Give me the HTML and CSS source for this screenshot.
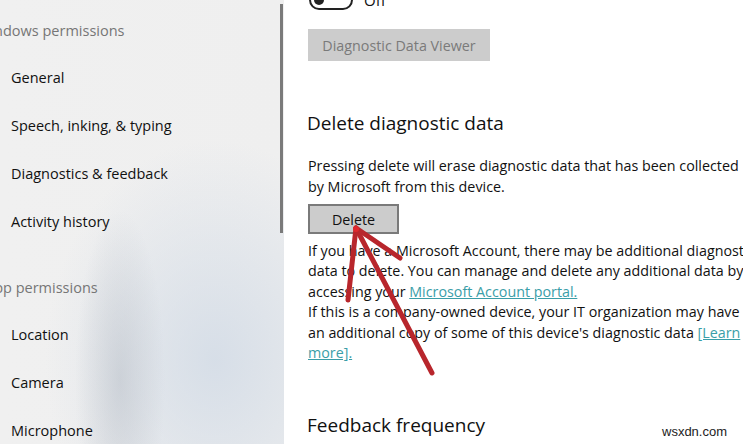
FILE: index.html
```html
<!DOCTYPE html>
<html>
<head>
<meta charset="utf-8">
<link rel="stylesheet" href="styles.css">
</head>
<body>
<div class="page">
  <nav class="sidebar">
    <div class="side-head first">Windows permissions</div>
    <div class="side-item">General</div>
    <div class="side-item">Speech, inking, &amp; typing</div>
    <div class="side-item">Diagnostics &amp; feedback</div>
    <div class="side-item">Activity history</div>
    <div class="side-head second">App permissions</div>
    <div class="side-item">Location</div>
    <div class="side-item">Camera</div>
    <div class="side-item">Microphone</div>
    <div class="scrollbar"></div>
  </nav>
  <main class="content">
    <div class="toggle-row">
      <span class="toggle"><span class="knob"></span></span>
      <span class="toggle-label">Off</span>
    </div>
    <button class="btn-disabled">Diagnostic Data Viewer</button>
    <h2 class="section-title">Delete diagnostic data</h2>
    <p class="para">Pressing delete will erase diagnostic data that has been collected<br>by Microsoft from this device.</p>
    <button class="btn-delete">Delete</button>
    <p class="para para-2">If you have a Microsoft Account, there may be additional diagnostic<br>data to delete. You can manage and delete any additional data by<br>accessing your <a class="link">Microsoft Account portal.</a><br>If this is a company-owned device, your IT organization may have<br>an additional copy of some of this device's diagnostic data <a class="link">[Learn<br>more].</a></p>
    <h2 class="section-title feedback">Feedback frequency</h2>
  </main>
</div>
<div class="watermark">wsxdn.com</div>
<svg class="arrow" width="743" height="444" viewBox="0 0 743 444">
  <g fill="none" stroke="#b8262c" stroke-width="5" stroke-linecap="round" stroke-linejoin="round">
    <path d="M356 228 L432 373"/>
    <path d="M356 228 L348 300"/>
    <path d="M356 228 L400 258"/>
  </g>
  <circle cx="356" cy="229" r="3" fill="#e0282d"/>
</svg>
</body>
</html>
```
FILE: styles.css
```css
html, body {
  margin: 0;
  padding: 0;
  width: 743px;
  height: 444px;
  overflow: hidden;
  background: #ffffff;
  font-family: "Segoe UI", "Open Sans", "Noto Sans", sans-serif;
  color: #111;
}

.page {
  display: flex;
  width: 743px;
  height: 444px;
}

.sidebar {
  position: relative;
  flex: 0 0 284px;
  height: 444px;
  background:
    radial-gradient(ellipse 45px 170px at 120px 380px, rgba(175,182,192,0.45), rgba(175,182,192,0) 100%),
    radial-gradient(ellipse 170px 220px at 215px 360px, rgba(210,219,230,0.85), rgba(210,219,230,0) 100%),
    linear-gradient(90deg, #f0f0f0, #efefef);
  font-size: 14.5px;
  overflow: hidden;
}

.side-head {
  color: #767676;
  height: 24px;
  line-height: 24px;
  margin-bottom: 11px;
  white-space: nowrap;
}
.side-head.first {
  margin-top: 19px;
  margin-left: -23px;
}
.side-head.second {
  margin-top: 30px;
  margin-left: -15px;
}

.side-item {
  height: 48px;
  line-height: 48px;
  padding-left: 11px;
  color: #111;
  white-space: nowrap;
}

.scrollbar {
  position: absolute;
  left: 280px;
  top: 4px;
  width: 3px;
  height: 229px;
  background: #7a7a7a;
}

.content {
  flex: 1;
  padding-left: 23px;
  white-space: nowrap;
}

.toggle-row {
  display: flex;
  align-items: center;
  gap: 11px;
  height: 20px;
  margin-top: -10px;
  margin-left: 2px;
}
.toggle {
  display: inline-flex;
  align-items: center;
  box-sizing: border-box;
  width: 44px;
  height: 20px;
  border: 2px solid #222;
  border-radius: 10px;
  padding-left: 3px;
}
.knob {
  width: 10px;
  height: 10px;
  border-radius: 50%;
  background: #222;
}
.toggle-label {
  font-size: 15px;
}

.btn-disabled {
  display: block;
  margin-top: 19px;
  margin-left: 1px;
  width: 182px;
  height: 32px;
  border: none;
  background: #cccccc;
  color: #7a7a7a;
  font-family: inherit;
  font-size: 14.3px;
  padding: 0;
}

.section-title {
  margin: 48px 0 0 0;
  font-weight: normal;
  font-size: 19px;
  line-height: 28px;
  color: #111;
}

.para {
  margin: 18px 0 0 1px;
  font-size: 14.3px;
  line-height: 21px;
}

.btn-delete {
  display: block;
  margin-top: 7px;
  margin-left: 1px;
  width: 91px;
  height: 30px;
  box-sizing: border-box;
  border: 2px solid #7a7a7a;
  background: #cccccc;
  color: #111;
  font-family: inherit;
  font-size: 14.3px;
  padding: 0;
}

.para-2 {
  margin-top: 7px;
  line-height: 20.4px;
}

.link {
  color: #3a9ea8;
  text-decoration: underline;
}

.section-title.feedback {
  margin-top: 48px;
}

.watermark {
  position: absolute;
  left: 660px;
  top: 424px;
  padding: 0 2px;
  font-family: "Liberation Sans", sans-serif;
  font-size: 13px;
  color: #222;
  background: #fff;
}

.arrow {
  position: absolute;
  left: 0;
  top: 0;
  pointer-events: none;
}
```
